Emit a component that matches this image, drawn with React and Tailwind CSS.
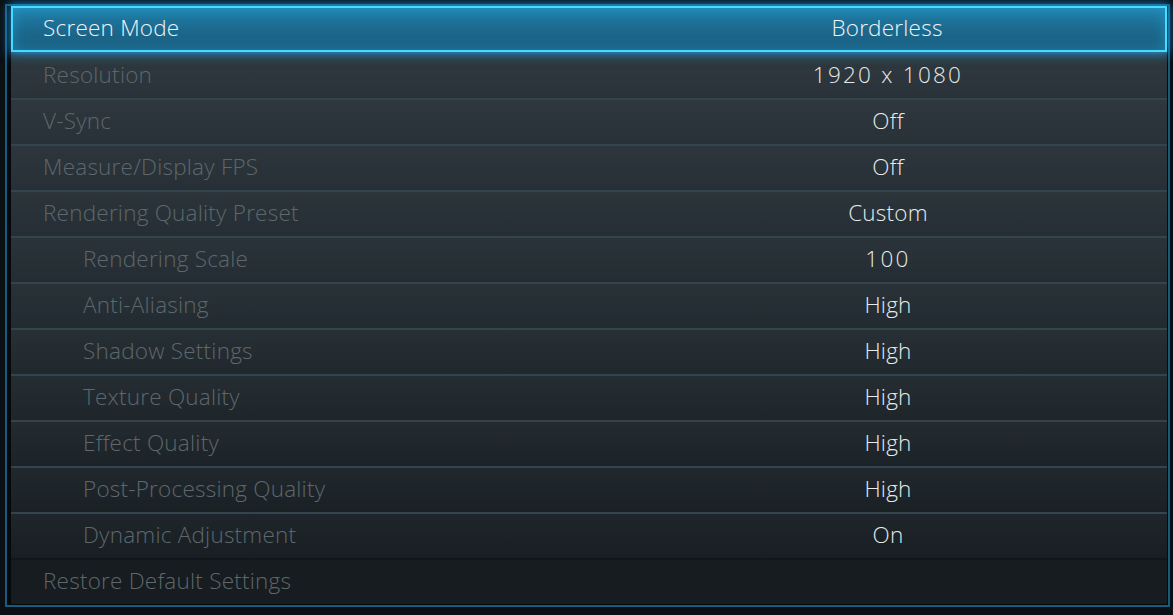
import React from "react";

const rows = [
  { label: "Screen Mode", value: "Borderless", active: true },
  { label: "Resolution", value: "1920 x 1080", num: true },
  { label: "V-Sync", value: "Off" },
  { label: "Measure/Display FPS", value: "Off" },
  { label: "Rendering Quality Preset", value: "Custom" },
  { label: "Rendering Scale", value: "100", sub: true, num: true },
  { label: "Anti-Aliasing", value: "High", sub: true },
  { label: "Shadow Settings", value: "High", sub: true },
  { label: "Texture Quality", value: "High", sub: true },
  { label: "Effect Quality", value: "High", sub: true },
  { label: "Post-Processing Quality", value: "High", sub: true },
  { label: "Dynamic Adjustment", value: "On", sub: true },
];

function Row({ label, value, active, sub, num }) {
  if (active) {
    return (
      <div className="relative h-[46px] flex items-center pb-[2px] border-2 border-[#46dcff] bg-gradient-to-b from-[#2080ab] via-[#1c6a8f] to-[#1a5b7c] shadow-[0_0_10px_2px_rgba(30,170,255,0.7),inset_0_0_14px_rgba(40,200,255,0.35)] z-10">
        <div className="w-[598px] pl-[30px] text-[#eef4f7]">{label}</div>
        <div className="flex-1 text-center text-[#eef4f7] pr-[2px]">{value}</div>
      </div>
    );
  }
  return (
    <div className="h-[46px] flex items-center pb-[2px] border-t-2 border-[#34444f] bg-gradient-to-b from-[rgba(255,255,255,0.025)] to-transparent">
      <div className={`w-[598px] text-[#5e676c] ${sub ? "pl-[72px]" : "pl-[32px]"}`}>
        {label}
      </div>
      <div className={`flex-1 text-center text-[#e6eaec] ${num ? "tracking-[0.1em]" : ""}`}>
        {value}
      </div>
    </div>
  );
}

export default function App() {
  return (
    <div
      className="w-[1173px] h-[615px] bg-[#0a1014] pl-[5px] pt-[4px] overflow-hidden"
      style={{ fontFamily: '"Open Sans", "Noto Sans", sans-serif' }}
    >
      <div className="w-[1165px] border-2 border-[#175c7e] pl-[4px] pr-[1px] pb-[1px] bg-[#05090c]">
        <div className="w-[1156px] bg-gradient-to-b from-[#2c363c] via-[#232c32] to-[#161c20] text-[22.5px] tracking-[0.01em] font-light leading-none">
          {rows.map((r) => (
            <Row key={r.label} {...r} />
          ))}
          <div className="h-[46px] flex items-center pb-[2px] border-t-2 border-[#10171b] bg-[#161c1f]">
            <div className="w-[598px] pl-[32px] text-[#5e676c]">
              Restore Default Settings
            </div>
            <div className="flex-1" />
          </div>
        </div>
      </div>
    </div>
  );
}
